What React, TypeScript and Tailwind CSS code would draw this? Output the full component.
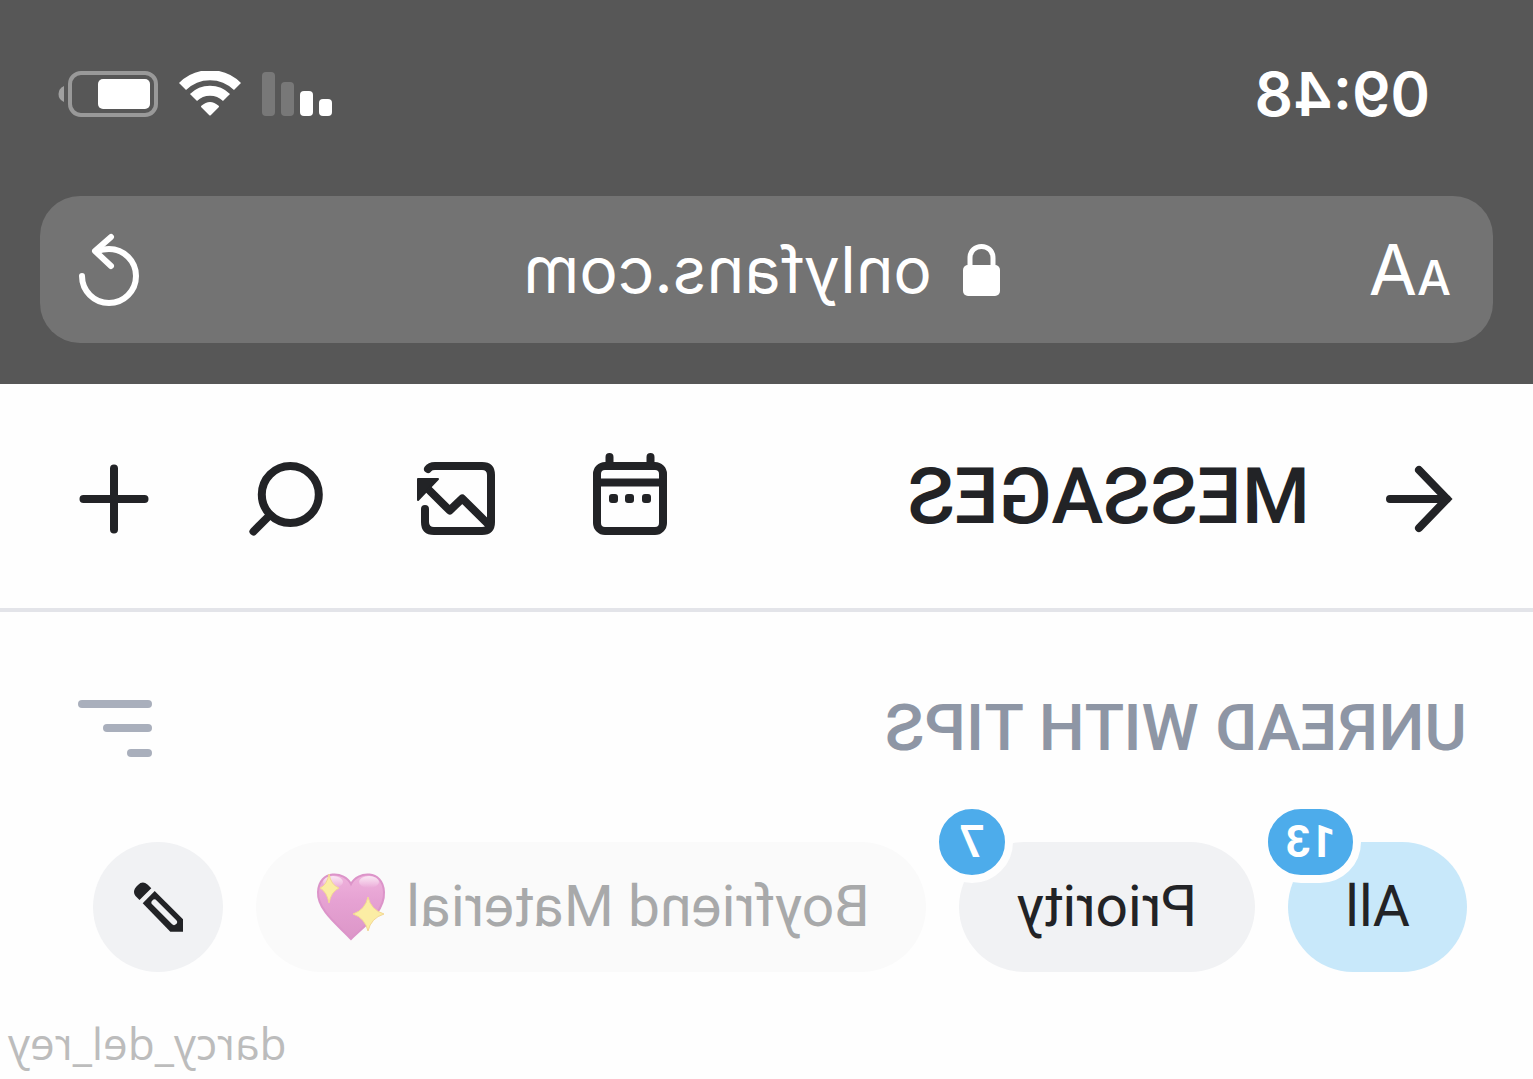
import React from "react";

function SignalIcon() {
  return (
    <svg width="70" height="46" viewBox="0 0 70 46" fill="#fff" aria-hidden="true">
      <rect x="0" y="28" width="13" height="17" rx="4" />
      <rect x="19" y="20" width="13" height="25" rx="4" />
      <rect x="38" y="11" width="13" height="34" rx="4" fillOpacity=".2" />
      <rect x="57" y="1" width="13" height="44" rx="4" fillOpacity=".2" />
    </svg>
  );
}

function WifiIcon() {
  return (
    <svg width="62" height="46" viewBox="0 0 62 46" fill="#fff" stroke="#fff" strokeLinejoin="round" aria-hidden="true">
      <g fill="none" strokeWidth="10">
        <path d="M3.500 15.500A39 39 0 0 1 58.500 15.500" />
        <path d="M14.500 26.500A23.500 23.500 0 0 1 47.500 26.500" />
      </g>
      <path d="M31 43.500L23 35.500Q31 28.500 39 35.500Z" strokeWidth="2" />
    </svg>
  );
}

function BatteryIcon() {
  return (
    <svg width="100" height="46" viewBox="0 0 100 46" aria-hidden="true">
      <rect x="2" y="2" width="86" height="42" rx="11" fill="none" stroke="#999" strokeWidth="4" />
      <rect x="8" y="8" width="52" height="30" rx="5" fill="#fff" />
      <path d="M94 15Q99.500 17.500 99.500 23T94 31Z" fill="#a0a0a0" />
    </svg>
  );
}

function LockIcon() {
  return (
    <svg width="37" height="54" viewBox="0 0 37 54" aria-hidden="true">
      <path d="M7 26V15C7 -.5 30 -.5 30 15V26" fill="none" stroke="#fff" strokeWidth="5" />
      <rect x="0" y="22" width="37" height="31" rx="5" fill="#fff" />
    </svg>
  );
}

function ReloadIcon() {
  return (
    <svg width="62" height="74" viewBox="0 0 62 74" fill="none" stroke="#fff" strokeWidth="6" strokeLinecap="round" strokeLinejoin="round" aria-hidden="true">
      <path d="M58 43A27 27 0 1 1 31 16Q37 16 43 18" />
      <path d="M29 4L45 18L29 33" />
    </svg>
  );
}

function NavIcon({ children }: { children: React.ReactNode }) {
  return (
    <svg width="98" height="98" viewBox="0 0 98 98" fill="none" stroke="#222326" strokeWidth="8" strokeLinecap="round" aria-hidden="true">
      {children}
    </svg>
  );
}

function PencilIcon() {
  return (
    <svg width="50" height="50" viewBox="0 0 50 50" fill="#222326" aria-hidden="true">
      <path d="M28.300 9L0 37.300V49.700H12.700L40.300 21.300Z" />
      <path d="M28.500 20.500L9 40" stroke="#f1f2f4" strokeWidth="6" strokeLinecap="round" />
      <path d="M31.700 6.300L35.500 2.500Q40.500 -1.500 45 3Q51.500 9 47.500 14L43.500 18Z" />
    </svg>
  );
}

function SparklingHeart() {
  return (
    <svg width="70" height="70" viewBox="0 0 70 70" role="img" aria-label="Sparkling heart">
      <defs>
        <linearGradient id="heartFill" x1="0" y1="0" x2="0" y2="1">
          <stop offset="0" stopColor="#efb2dc" />
          <stop offset=".4" stopColor="#e6a2d3" />
          <stop offset="1" stopColor="#dc96c8" />
        </linearGradient>
        <linearGradient id="heartGloss" x1="0" y1="0" x2="0" y2="1">
          <stop offset="0" stopColor="#fff" stopOpacity=".7" />
          <stop offset="1" stopColor="#fff" stopOpacity="0" />
        </linearGradient>
      </defs>
      <path d="M35 12C41 -1 67 -3 68 20C69 38 47 54 35 67C22 54 1 40 2 20C3 -3 29 -1 35 12Z" fill="url(#heartFill)" stroke="#dc94c9" strokeWidth="2" />
      <ellipse cx="17" cy="10" rx="10" ry="6" fill="url(#heartGloss)" />
      <ellipse cx="53" cy="10" rx="10" ry="6" fill="url(#heartGloss)" />
      <path d="M57 2Q59 13 66 16Q59 20 57 31Q55 20 47 16Q55 13 57 2Z" fill="#fbeda4" stroke="#f3d795" />
      <path d="M18 25Q21 38 33 42Q21 46 18 59Q15 46 2 42Q15 38 18 25Z" fill="#fbeda4" stroke="#f3d795" />
    </svg>
  );
}

function Badge({ children, wide }: { children: React.ReactNode; wide?: boolean }) {
  return (
    <span
      className={
        "absolute -top-[41px] -right-7 flex h-[82px] items-center justify-center rounded-full border-8 border-[#fefefe] bg-[#4daceb] text-[44px] leading-none font-bold text-white " +
        (wide ? "w-[101px]" : "w-[82px]")
      }
    >
      {children}
    </span>
  );
}

export default function App() {
  return (
    <div className="min-h-screen -scale-x-100 overflow-hidden bg-[#fefefe] font-[Roboto,sans-serif] text-[#222326]">
      <header className="bg-[#575757] px-10 pt-[62px] pb-[41px] font-[Inter,sans-serif] text-white">
        <div className="flex h-16 items-center justify-between pr-[18px] pl-[63px]">
          <time className="text-[60px] leading-none font-semibold">09:48</time>
          <div className="flex items-center gap-[21px]">
            <SignalIcon />
            <WifiIcon />
            <BatteryIcon />
          </div>
        </div>
        <div className="mt-[70px] flex h-[147px] items-center rounded-[40px] bg-[#737373] pr-[38px] pl-[42px]">
          <button type="button" aria-label="Text size" className="flex items-baseline leading-none">
            <span className="text-5xl font-medium">A</span>
            <span className="text-[70px] leading-none">A</span>
          </button>
          <div className="flex flex-1 items-center justify-center gap-[31px]">
            <LockIcon />
            <input
              type="text"
              aria-label="Address"
              defaultValue="onlyfans.com"
              className="w-[423px] bg-transparent text-[64px] leading-20 outline-none"
            />
          </div>
          <button type="button" aria-label="Reload">
            <ReloadIcon />
          </button>
        </div>
      </header>

      <nav className="flex items-center border-b-4 border-[#e3e4e9] px-[65px] pt-[66px] pb-[60px]">
        <button type="button" aria-label="Back">
          <NavIcon>
            <path d="M78 49H21M49 20L21 49L49 78" />
          </NavIcon>
        </button>
        <h1 className="ml-[60px] flex-1 pb-1 text-[78px] leading-[94px] font-medium">MESSAGES</h1>
        <div className="flex gap-[74px]">
          <button type="button" aria-label="Calendar">
            <NavIcon>
              <rect x="16" y="16" width="66" height="65" rx="8" />
              <path d="M28.500 7V16M69.500 7V16M17 32.500H81" />
              <g fill="#222326" stroke="none">
                <rect x="28" y="44" width="9" height="9" rx="3" />
                <rect x="45" y="44" width="9" height="9" rx="3" />
                <rect x="61" y="44" width="9" height="9" rx="3" />
              </g>
            </NavIcon>
          </button>
          <button type="button" aria-label="Media">
            <NavIcon>
              <path d="M79 19Q77 16 72 16H25Q16 16 16 25V72Q16 81 25 81H73Q82 81 82 72V59" />
              <path d="M18 75L44.700 48.500L57.300 60.500L80 38" strokeLinejoin="round" />
              <path d="M89 29V50L69 29Z" fill="#222326" strokeWidth="2" strokeLinejoin="round" />
            </NavIcon>
          </button>
          <button type="button" aria-label="Search">
            <NavIcon>
              <circle cx="44.700" cy="44.500" r="28.500" />
              <path d="M65 65L81.500 81.500" />
            </NavIcon>
          </button>
          <button type="button" aria-label="New message">
            <NavIcon>
              <path d="M49 18.500V79.500M18.500 49H79.500" />
            </NavIcon>
          </button>
        </div>
      </nav>

      <main className="px-[66px] pt-20">
        <div className="flex items-center justify-between pr-3">
          <h2 className="text-[65px] leading-[72px] font-medium text-[#8e96a5]">UNREAD WITH TIPS</h2>
          <button type="button" aria-label="Sort" className="flex h-[57px] w-[74px] flex-col justify-between">
            <span className="h-2 w-full rounded-full bg-[#a9afbc]" />
            <span className="h-2 w-[49px] rounded-full bg-[#a9afbc]" />
            <span className="h-2 w-[25px] rounded-full bg-[#a9afbc]" />
          </button>
        </div>
        <div className="mt-[78px] flex gap-[33px] text-[57px] leading-[130px]">
          <button type="button" aria-pressed="true" className="relative rounded-full bg-[#c8e8fa] px-[57px]">
            All
            <Badge wide>13</Badge>
          </button>
          <button type="button" aria-pressed="false" className="relative rounded-full bg-[#f1f2f4] px-[58px]">
            Priority
            <Badge>7</Badge>
          </button>
          <button type="button" aria-pressed="false" className="flex items-center gap-5 rounded-full bg-[#fafafa] pr-[60px] pl-14 text-[#a8a9aa]">
            Boyfriend Material
            <SparklingHeart />
          </button>
          <button type="button" aria-label="Edit lists" className="flex size-[130px] items-center justify-center rounded-full bg-[#f1f2f4]">
            <PencilIcon />
          </button>
        </div>
      </main>

      <footer className="mt-[41px] pr-2 text-right font-['Open_Sans',sans-serif] text-[44px] leading-[60px] text-[#bcbcbc]">darcy_del_rey</footer>
    </div>
  );
}
